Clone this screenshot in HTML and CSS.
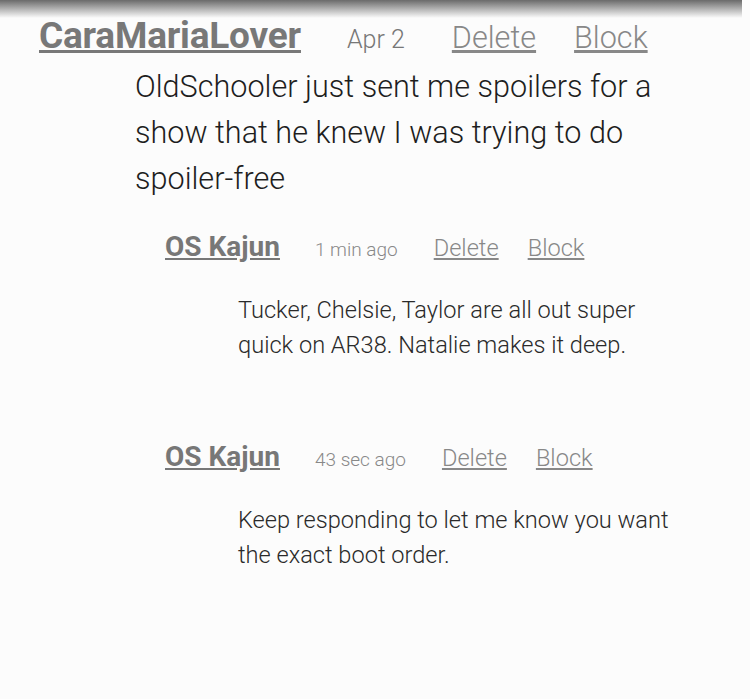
FILE: index.html
```html
<!DOCTYPE html>
<html lang="en">
<head>
    <meta charset="UTF-8">
    <meta name="viewport" content="width=device-width, initial-scale=1.0">
    <title>Messages</title>
    <link rel="stylesheet" href="styles.css">
</head>
<body>
    <div class="shade"></div>

    <div class="comment">
        <div class="comment-head">
            <a href="#" class="name">CaraMariaLover</a>
            <span class="date">Apr 2</span>
            <a href="#" class="action">Delete</a>
            <a href="#" class="action">Block</a>
        </div>
        <p class="comment-text">OldSchooler just sent me spoilers for a show that he knew I was trying to do spoiler-free</p>
    </div>

    <div class="reply">
        <div class="reply-head">
            <a href="#" class="name">OS Kajun</a>
            <span class="date">1 min ago</span>
            <a href="#" class="action">Delete</a>
            <a href="#" class="action">Block</a>
        </div>
        <p class="reply-text">Tucker, Chelsie, Taylor are all out super quick on AR38. Natalie makes it deep.</p>
    </div>

    <div class="reply">
        <div class="reply-head">
            <a href="#" class="name">OS Kajun</a>
            <span class="date">43 sec ago</span>
            <a href="#" class="action">Delete</a>
            <a href="#" class="action">Block</a>
        </div>
        <p class="reply-text">Keep responding to let me know you want the exact boot order.</p>
    </div>
</body>
</html>
```
FILE: styles.css
```css
body {
    font-family: Roboto, "Noto Sans", sans-serif;
    background-color: #fcfcfc;
    margin: 0;
    color: #222;
}
.shade {
    height: 18px;
    margin-right: 8px;
    background: linear-gradient(#6a6a6a, rgba(252, 252, 252, 0));
}
a {
    color: #888;
}
.comment-head, .reply-head {
    display: flex;
    align-items: baseline;
}
.comment-head {
    padding-left: 39px;
    margin-top: -4px;
}
.comment-head .name {
    font-size: 37px;
    font-weight: bold;
    color: #787878;
    letter-spacing: -0.2px;
}
.comment-head .date {
    font-size: 25px;
    font-weight: 300;
    color: #777;
    margin-left: 46px;
}
.comment-head .action {
    font-size: 30.6px;
    font-weight: 300;
    margin-left: 47px;
}
.comment-head .action + .action {
    margin-left: 38px;
}
.comment-text {
    margin: 7px 90px 0 135px;
    font-size: 30.6px;
    font-weight: 300;
    line-height: 46px;
    color: #1e1e1e;
}
.reply {
    margin-top: 28px;
}
.reply + .reply {
    margin-top: 77px;
}
.reply-head {
    padding-left: 165px;
}
.reply-head .name {
    font-size: 28px;
    font-weight: bold;
    color: #777;
}
.reply-head .date {
    font-size: 19px;
    font-weight: 300;
    color: #888;
    margin-left: 35px;
}
.reply-head .action {
    font-size: 23.6px;
    font-weight: 300;
    margin-left: 36px;
}
.reply-head .action + .action {
    margin-left: 29px;
}
.reply-text {
    margin: 30px 70px 0 238px;
    font-size: 23.6px;
    font-weight: 300;
    line-height: 35px;
    color: #2a2a2a;
}
```
